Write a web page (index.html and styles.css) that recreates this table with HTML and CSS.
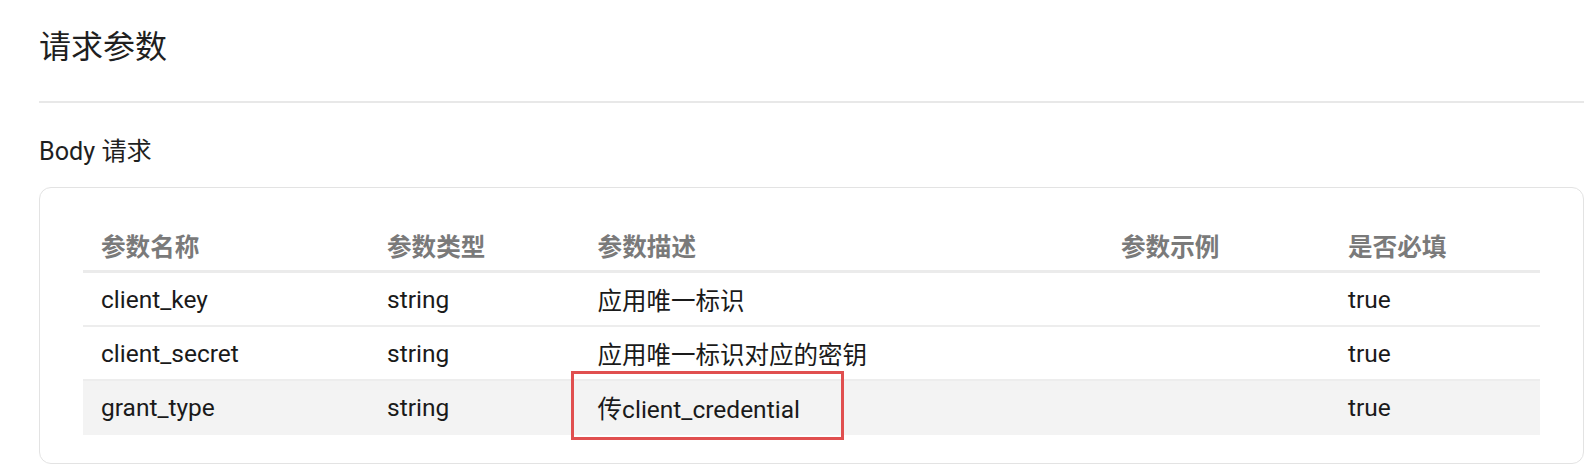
FILE: index.html
```html
<!DOCTYPE html>
<html lang="zh-CN">
<head>
<meta charset="utf-8">
<title>请求参数</title>
<link rel="stylesheet" href="styles.css">
</head>
<body>
<div class="page">
  <h2 class="title">请求参数</h2>
  <div class="divider"></div>
  <h3 class="subtitle">Body 请求</h3>
  <div class="card">
    <table class="params">
      <colgroup>
        <col class="c1"><col class="c2"><col class="c3"><col class="c4"><col class="c5">
      </colgroup>
      <thead>
        <tr><th>参数名称</th><th>参数类型</th><th>参数描述</th><th>参数示例</th><th>是否必填</th></tr>
      </thead>
      <tbody>
        <tr><td>client_key</td><td>string</td><td>应用唯一标识</td><td></td><td>true</td></tr>
        <tr><td>client_secret</td><td>string</td><td>应用唯一标识对应的密钥</td><td></td><td>true</td></tr>
        <tr class="alt"><td>grant_type</td><td>string</td><td class="marked">传client_credential<span class="highlight"></span></td><td></td><td>true</td></tr>
      </tbody>
    </table>
  </div>
</div>
</body>
</html>
```

FILE: styles.css
```css
html, body {
  margin: 0;
  padding: 0;
  background: #ffffff;
}
body {
  font-family: Roboto, "Noto Sans CJK SC", sans-serif;
  color: #1f1f1f;
}
.page {
  padding: 29px 9px 0 39px;
}
.title {
  margin: 0;
  font-size: 32px;
  font-weight: 400;
  line-height: 36px;
  color: #1f1f1f;
}
.divider {
  margin-top: 36px;
  height: 2px;
  background: #e8e8e8;
}
.subtitle {
  margin: 34px 0 0 0;
  font-size: 25.2px;
  font-weight: 400;
  line-height: 30px;
  color: #1f1f1f;
}
.card {
  margin-top: 20px;
  border: 1px solid #e3e3e3;
  border-radius: 12px;
  padding: 32px 43px 28px 43px;
}
.params {
  width: 100%;
  border-collapse: collapse;
  table-layout: fixed;
}
.c1 { width: 286px; }
.c2 { width: 210.6px; }
.c3 { width: 523.4px; }
.c4 { width: 227px; }
.c5 { width: 210px; }
.params th {
  text-align: left;
  font-size: 24.6px;
  font-weight: 700;
  color: #7a7a7a;
  height: 50px;
  padding: 0 18px;
  border-bottom: 3px solid #ebebeb;
  vertical-align: middle;
}
.params td {
  font-size: 24.5px;
  height: 52px;
  padding: 0 18px;
  border-bottom: 2px solid #ededed;
  vertical-align: middle;
  white-space: nowrap;
  color: #1a1a1a;
}
.params tr.alt td {
  background: #f3f3f3;
  border-bottom-color: #f3f3f3;
}
.marked {
  position: relative;
}
.highlight {
  position: absolute;
  left: -9px;
  top: -10px;
  width: 273px;
  height: 69px;
  box-sizing: border-box;
  border: 3px solid #e04f4f;
}
```
